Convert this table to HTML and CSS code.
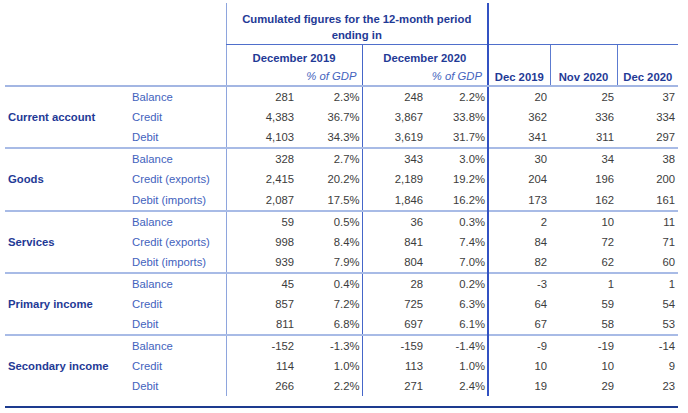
FILE: index.html
```html
<!DOCTYPE html>
<html lang="en">
<head>
<meta charset="utf-8">
<title>Balance of payments</title>
<link rel="stylesheet" href="styles.css">
</head>
<body>
<div class="wrap">
<table class="bop">
  <colgroup>
    <col class="c-label"><col class="c-sub">
    <col class="c-v1"><col class="c-p1">
    <col class="c-v2"><col class="c-p2">
    <col class="c-m1"><col class="c-m2"><col class="c-m3">
  </colgroup>
  <thead>
    <tr class="h1">
      <th class="blank" colspan="2" rowspan="3"></th>
      <th class="cum" colspan="4">Cumulated figures for the 12-month period ending in</th>
      <th class="topright" colspan="3"></th>
    </tr>
    <tr class="h2">
      <th class="yr first" colspan="2">December 2019</th>
      <th class="yr second" colspan="2">December 2020</th>
      <th class="mon m1" rowspan="2">Dec 2019</th>
      <th class="mon" rowspan="2">Nov 2020</th>
      <th class="mon" rowspan="2">Dec 2020</th>
    </tr>
    <tr class="h3">
      <th class="pct first" colspan="2">% of GDP</th>
      <th class="pct second" colspan="2">% of GDP</th>
    </tr>
  </thead>
  <tbody>
    <tr class="g-start"><th class="lab" rowspan="3">Current account</th><td class="sub">Balance</td><td class="v1">281</td><td class="p1">2.3%</td><td class="v2">248</td><td class="p2">2.2%</td><td class="m1">20</td><td>25</td><td>37</td></tr>
    <tr><td class="sub">Credit</td><td class="v1">4,383</td><td class="p1">36.7%</td><td class="v2">3,867</td><td class="p2">33.8%</td><td class="m1">362</td><td>336</td><td>334</td></tr>
    <tr><td class="sub">Debit</td><td class="v1">4,103</td><td class="p1">34.3%</td><td class="v2">3,619</td><td class="p2">31.7%</td><td class="m1">341</td><td>311</td><td>297</td></tr>

    <tr class="sep"><th class="lab" rowspan="3">Goods</th><td class="sub">Balance</td><td class="v1">328</td><td class="p1">2.7%</td><td class="v2">343</td><td class="p2">3.0%</td><td class="m1">30</td><td>34</td><td>38</td></tr>
    <tr><td class="sub">Credit (exports)</td><td class="v1">2,415</td><td class="p1">20.2%</td><td class="v2">2,189</td><td class="p2">19.2%</td><td class="m1">204</td><td>196</td><td>200</td></tr>
    <tr><td class="sub">Debit (imports)</td><td class="v1">2,087</td><td class="p1">17.5%</td><td class="v2">1,846</td><td class="p2">16.2%</td><td class="m1">173</td><td>162</td><td>161</td></tr>

    <tr class="sep"><th class="lab" rowspan="3">Services</th><td class="sub">Balance</td><td class="v1">59</td><td class="p1">0.5%</td><td class="v2">36</td><td class="p2">0.3%</td><td class="m1">2</td><td>10</td><td>11</td></tr>
    <tr><td class="sub">Credit (exports)</td><td class="v1">998</td><td class="p1">8.4%</td><td class="v2">841</td><td class="p2">7.4%</td><td class="m1">84</td><td>72</td><td>71</td></tr>
    <tr><td class="sub">Debit (imports)</td><td class="v1">939</td><td class="p1">7.9%</td><td class="v2">804</td><td class="p2">7.0%</td><td class="m1">82</td><td>62</td><td>60</td></tr>

    <tr class="sep"><th class="lab" rowspan="3">Primary income</th><td class="sub">Balance</td><td class="v1">45</td><td class="p1">0.4%</td><td class="v2">28</td><td class="p2">0.2%</td><td class="m1">-3</td><td>1</td><td>1</td></tr>
    <tr><td class="sub">Credit</td><td class="v1">857</td><td class="p1">7.2%</td><td class="v2">725</td><td class="p2">6.3%</td><td class="m1">64</td><td>59</td><td>54</td></tr>
    <tr><td class="sub">Debit</td><td class="v1">811</td><td class="p1">6.8%</td><td class="v2">697</td><td class="p2">6.1%</td><td class="m1">67</td><td>58</td><td>53</td></tr>

    <tr class="sep"><th class="lab" rowspan="3">Secondary income</th><td class="sub">Balance</td><td class="v1">-152</td><td class="p1">-1.3%</td><td class="v2">-159</td><td class="p2">-1.4%</td><td class="m1">-9</td><td>-19</td><td>-14</td></tr>
    <tr><td class="sub">Credit</td><td class="v1">114</td><td class="p1">1.0%</td><td class="v2">113</td><td class="p2">1.0%</td><td class="m1">10</td><td>10</td><td>9</td></tr>
    <tr><td class="sub">Debit</td><td class="v1">266</td><td class="p1">2.2%</td><td class="v2">271</td><td class="p2">2.4%</td><td class="m1">19</td><td>29</td><td>23</td></tr>
  </tbody>
</table>
<div class="bottom-rule"></div>
</div>
</body>
</html>
```
FILE: styles.css
```css
html, body {
  margin: 0;
  padding: 0;
  background: #ffffff;
}

.wrap {
  padding: 3px 0 0 5px;
  width: 673px;
}

.bop {
  border-collapse: collapse;
  table-layout: fixed;
  width: 673px;
  font-family: "Liberation Sans", Arial, sans-serif;
  font-size: 11.3px;
  color: #3c3c3c;
}

.c-label { width: 126px; }
.c-sub { width: 95px; }
.c-v1 { width: 72px; }
.c-p1 { width: 64px; }
.c-v2 { width: 65px; }
.c-p2 { width: 61px; }
.c-m1 { width: 62px; }
.c-m2 { width: 67px; }
.c-m3 { width: 61px; }

.bop th,
.bop td {
  padding: 0;
  white-space: nowrap;
}

/* ---------- header ---------- */
.bop thead th {
  color: #1f3a96;
  font-weight: bold;
  line-height: 16px;
}

.h1 th { height: 33px; }

.h1 .cum {
  text-align: center;
  vertical-align: top;
  padding: 8px 6px 0;
  white-space: normal;
  border-left: 1px solid #8ea5dd;
  border-right: 2px solid #3352c2;
  border-bottom: 1px solid #4f6fcb;
}

.h1 .topright {
  border-bottom: 1px solid #4f6fcb;
}

.h2 .yr {
  text-align: center;
  vertical-align: top;
  padding-top: 5px;
  height: 17px;
}

.h2 .first,
.h3 .first {
  border-left: 1px solid #8ea5dd;
}

.h2 .second,
.h3 .second {
  border-left: 1px solid #4566c9;
}

.h3 th {
  height: 18px;
  border-bottom: 2px solid #a3b6e3;
}

.h3 .pct {
  font-weight: normal;
  font-style: italic;
  color: #4463bd;
  text-align: right;
  padding-right: 5px;
  vertical-align: middle;
}

.h2 .mon {
  vertical-align: bottom;
  text-align: center;
  padding-bottom: 0;
  border-left: 1px solid #5c7bd0;
  border-bottom: 2px solid #a3b6e3;
}

.h2 .mon.m1 {
  border-left: 2px solid #3352c2;
}

.blank {
  border-bottom: 2px solid #a3b6e3;
}

/* ---------- body ---------- */
.bop tbody td,
.bop tbody th {
  height: 20.1px;
  line-height: 20px;
  text-align: right;
  padding-right: 3px;
}

.bop tbody .lab {
  text-align: left;
  padding: 0 0 0 3px;
  color: #1f3a96;
  font-weight: bold;
  vertical-align: middle;
}

.bop tbody .sub {
  text-align: left;
  padding: 0 0 0 1px;
  color: #4262bd;
}

.bop tbody .v1 {
  border-left: 1px solid #8ea5dd;
  padding-right: 4px;
}

.bop tbody .p1 {
  padding-right: 2px;
}

.bop tbody .v2 {
  border-left: 1px solid #4566c9;
  padding-right: 4px;
}

.bop tbody .p2 {
  padding-right: 2px;
}

.bop tbody .m1 {
  border-left: 2px solid #3352c2;
}

.bop tbody tr.sep td,
.bop tbody tr.sep th {
  border-top: 2px solid #a8bbe6;
}

.bottom-rule {
  height: 2px;
  background: #1d3b8f;
  margin-top: 10px;
}
```
